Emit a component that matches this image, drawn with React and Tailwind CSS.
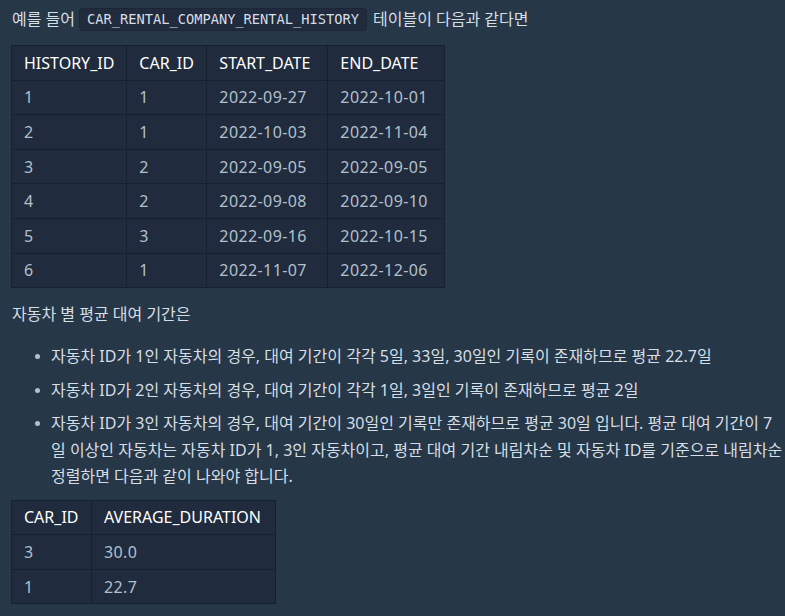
import React from "react";

const history = [
  ["1", "1", "2022-09-27", "2022-10-01"],
  ["2", "1", "2022-10-03", "2022-11-04"],
  ["3", "2", "2022-09-05", "2022-09-05"],
  ["4", "2", "2022-09-08", "2022-09-10"],
  ["5", "3", "2022-09-16", "2022-10-15"],
  ["6", "1", "2022-11-07", "2022-12-06"],
];

const result = [
  ["3", "30.0"],
  ["1", "22.7"],
];

const bullets = [
  "자동차 ID가 1인 자동차의 경우, 대여 기간이 각각 5일, 33일, 30일인 기록이 존재하므로 평균 22.7일",
  "자동차 ID가 2인 자동차의 경우, 대여 기간이 각각 1일, 3일인 기록이 존재하므로 평균 2일",
  "자동차 ID가 3인 자동차의 경우, 대여 기간이 30일인 기록만 존재하므로 평균 30일 입니다. 평균 대여 기간이 7일 이상인 자동차는 자동차 ID가 1, 3인 자동차이고, 평균 대여 기간 내림차순 및 자동차 ID를 기준으로 내림차순 정렬하면 다음과 같이 나와야 합니다.",
];

const DataTable = ({ head, widths, rows }) => (
  <table className="border-collapse bg-[#202b3d] border border-[#172030]">
    <thead>
      <tr>
        {head.map((h, j) => (
          <th key={h} className={`border border-[#172030] px-3 h-[34.6px] text-left font-normal text-white ${widths[j]}`}>
            {h}
          </th>
        ))}
      </tr>
    </thead>
    <tbody>
      {rows.map((r, i) => (
        <tr key={i}>
          {r.map((c, j) => (
            <td key={j} className="border border-[#172030] px-3 h-[34.6px] text-[#b2c0cc] tracking-[0.4px]">
              {c}
            </td>
          ))}
        </tr>
      ))}
    </tbody>
  </table>
);

const App = () => {
  return (
    <div
      className="min-h-screen w-[785px] bg-[#263747] text-[#d6dee6] text-[16px] leading-[26px] pl-[12px] pt-[6px]"
      style={{ fontFamily: '"Noto Sans", "Noto Sans CJK KR", sans-serif' }}
    >
      <p className="flex items-center">
        예를 들어
        <code className="ml-[4px] mr-[6px] px-[7px] py-[1px] rounded bg-[#202b3d] border border-[#1c2636] text-[13.7px] leading-[19px] text-[#d6dee6] font-['DejaVu_Sans_Mono',monospace]">
          CAR_RENTAL_COMPANY_RENTAL_HISTORY
        </code>
        테이블이 다음과 같다면
      </p>

      <div className="mt-[13px] -ml-px">
        <DataTable
          head={["HISTORY_ID", "CAR_ID", "START_DATE", "END_DATE"]}
          widths={["w-[115px]", "w-[80px]", "w-[121px]", "w-[117px]"]}
          rows={history}
        />
      </div>

      <p className="mt-[13px]">자동차 별 평균 대여 기간은</p>

      <ul className="mt-[16px] flex flex-col gap-[7px]">
        {bullets.map((b, i) => (
          <li key={i} className="flex">
            <span className="mt-[11px] ml-[23px] mr-[11px] w-[5px] h-[5px] rounded-full bg-[#b2c0cc] shrink-0" />
            <span className="leading-[26.5px]">{b}</span>
          </li>
        ))}
      </ul>

      <div className="mt-[10px] -ml-px">
        <DataTable head={["CAR_ID", "AVERAGE_DURATION"]} widths={["w-[80px]", "w-[184px]"]} rows={result} />
      </div>
    </div>
  );
};

export default App;
